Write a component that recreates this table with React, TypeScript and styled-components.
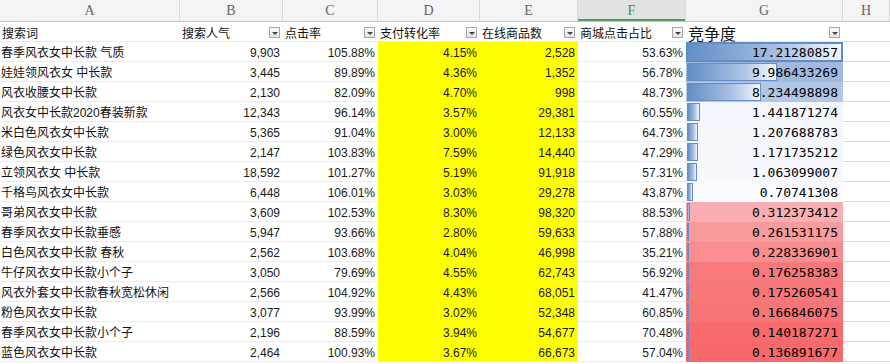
import React from "react";
import styled, { createGlobalStyle } from "styled-components";

const COLS = "180px 103px 95px 102px 98px 108px 157px 1fr";

const GlobalStyle = createGlobalStyle`
  html, body { margin: 0; padding: 0; background: #fff; }
  body { font-family: "Liberation Sans", "Noto Sans CJK SC", sans-serif; }
`;

const Sheet = styled.div`
  width: 890px;
  height: 364px;
  overflow: hidden;
  display: flex;
  flex-direction: column;
  background: #fff;
`;

const LetterRow = styled.div`
  display: grid;
  grid-template-columns: ${COLS};
  height: 22px;
  flex: none;
  box-sizing: border-box;
  background: #f4f4f4;
  border-bottom: 1px solid #c8c8c8;
`;

const ColLetter = styled.div<{ $selected?: boolean }>`
  display: flex;
  align-items: center;
  justify-content: center;
  font-family: "Liberation Serif", "DejaVu Serif", serif;
  font-size: 14px;
  color: ${(p) => (p.$selected ? "#3f8b4f" : "#666")};
  background: ${(p) => (p.$selected ? "#e2e2e2" : "transparent")};
  border-right: 1px solid #d8d8d8;
  box-shadow: ${(p) => (p.$selected ? "inset 0 -2px 0 #4f9d5f" : "none")};
`;

const Row = styled.div`
  display: grid;
  grid-template-columns: ${COLS};
  height: 20px;
  flex: none;
`;

const HeaderCell = styled.div<{ $big?: boolean }>`
  display: flex;
  align-items: center;
  justify-content: space-between;
  box-sizing: border-box;
  padding: 1px 3px 0 2px;
  font-family: "Noto Sans CJK SC", sans-serif;
  font-size: ${(p) => (p.$big ? "16px" : "12px")};
  line-height: 1;
  color: #111;
  white-space: nowrap;
  background: #fff;
  box-shadow: inset 0 -1px 0 #ebebeb;
`;

const FilterButton = styled.span`
  flex: none;
  width: 11px;
  height: 11px;
  box-sizing: border-box;
  border: 1px solid #a8a8a8;
  background: linear-gradient(#fbfbfb, #e4e4e4);
  display: flex;
  align-items: center;
  justify-content: center;
  &::after {
    content: "";
    border-left: 3px solid transparent;
    border-right: 3px solid transparent;
    border-top: 3px solid #404040;
    margin-top: 1px;
  }
`;

const KeywordCell = styled.div`
  box-sizing: border-box;
  height: 20px;
  padding: 3px 2px 0 1px;
  line-height: 17px;
  font-family: "Liberation Sans", "Noto Sans CJK SC", sans-serif;
  font-size: 12px;
  color: #111;
  white-space: nowrap;
  overflow: hidden;
  background: #fff;
  box-shadow: inset 0 -1px 0 #ececec;
`;

const NumberCell = styled.div<{ $highlight?: boolean }>`
  box-sizing: border-box;
  height: 20px;
  padding: 3px 3px 0 2px;
  line-height: 17px;
  font-family: "Liberation Sans", sans-serif;
  font-size: 12px;
  color: #1a1a1a;
  text-align: right;
  white-space: nowrap;
  overflow: hidden;
  background: ${(p) => (p.$highlight ? "#ffff00" : "#fff")};
  box-shadow: ${(p) => (p.$highlight ? "none" : "inset 0 -1px 0 #ececec")};
`;

const ScoreCell = styled.div`
  position: relative;
  box-sizing: border-box;
  height: 20px;
  padding: 2px 5px 0 2px;
  line-height: 18px;
  font-family: "DejaVu Sans Mono", "Liberation Mono", monospace;
  font-size: 13px;
  color: #000;
  text-align: right;
  white-space: nowrap;
  overflow: hidden;
`;

const DataBar = styled.span`
  position: absolute;
  left: 1px;
  top: 1px;
  bottom: 1px;
  box-sizing: border-box;
  border: 1px solid #638ec6;
  background: linear-gradient(90deg, #638ec6 0%, #a9c0e3 60%, #f4f7fc 100%);
`;

const ScoreText = styled.span`
  position: relative;
`;

const EmptyCell = styled.div`
  background: #fff;
  box-shadow: inset 0 -1px 0 #d9d9d9;
`;

type Item = [string, string, string, string, string, string, number];

const rows: Item[] = [
  ["春季风衣女中长款 气质", "9,903", "105.88%", "4.15%", "2,528", "53.63%", 17.21280857],
  ["娃娃领风衣女 中长款", "3,445", "89.89%", "4.36%", "1,352", "56.78%", 9.986433269],
  ["风衣收腰女中长款", "2,130", "82.09%", "4.70%", "998", "48.73%", 8.234498898],
  ["风衣女中长款2020春装新款", "12,343", "96.14%", "3.57%", "29,381", "60.55%", 1.441871274],
  ["米白色风衣女中长款", "5,365", "91.04%", "3.00%", "12,133", "64.73%", 1.207688783],
  ["绿色风衣女中长款", "2,147", "103.83%", "7.59%", "14,440", "47.29%", 1.171735212],
  ["立领风衣女 中长款", "18,592", "101.27%", "5.19%", "91,918", "57.31%", 1.063099007],
  ["千格鸟风衣女中长款", "6,448", "106.01%", "3.03%", "29,278", "43.87%", 0.70741308],
  ["哥弟风衣女中长款", "3,609", "102.53%", "8.30%", "98,320", "88.53%", 0.312373412],
  ["春季风衣女中长款垂感", "5,947", "93.66%", "2.80%", "59,633", "57.88%", 0.261531175],
  ["白色风衣女中长款 春秋", "2,562", "103.68%", "4.04%", "46,998", "35.21%", 0.228336901],
  ["牛仔风衣女中长款小个子", "3,050", "79.69%", "4.55%", "62,743", "56.92%", 0.176258383],
  ["风衣外套女中长款春秋宽松休闲", "2,566", "104.92%", "4.43%", "68,051", "41.47%", 0.175260541],
  ["粉色风衣女中长款", "3,077", "93.99%", "3.02%", "52,348", "60.85%", 0.166846075],
  ["春季风衣女中长款小个子", "2,196", "88.59%", "3.94%", "54,677", "70.48%", 0.140187271],
  ["蓝色风衣女中长款", "2,464", "100.93%", "3.67%", "66,673", "57.04%", 0.136891677],
];

const scores = rows.map((r) => r[6]);
const sorted = [...scores].sort((a, b) => a - b);
const maxScore = sorted[sorted.length - 1];
const minScore = sorted[0];
const midScore = (sorted[7] + sorted[8]) / 2;

const WHITE = [252, 252, 255];
const BLUE = [90, 138, 198];
const RED = [248, 105, 107];

const mix = (a: number[], b: number[], t: number) =>
  `rgb(${a.map((v, i) => Math.round(v + (b[i] - v) * t)).join(",")})`;

const scaleColor = (v: number) =>
  v >= midScore
    ? mix(WHITE, BLUE, (v - midScore) / (maxScore - midScore))
    : mix(WHITE, RED, (midScore - v) / (midScore - minScore));

const BAR_MAX = 155;
const barWidth = (v: number) => Math.max(2, Math.round((v / maxScore) * BAR_MAX));

const letters = ["A", "B", "C", "D", "E", "F", "G", "H"];
const headers = ["搜索词", "搜索人气", "点击率", "支付转化率", "在线商品数", "商城点击占比"];

export default function App() {
  return (
    <>
      <GlobalStyle />
      <Sheet>
        <LetterRow>
          {letters.map((l) => (
            <ColLetter key={l} $selected={l === "F"}>
              {l}
            </ColLetter>
          ))}
        </LetterRow>
        <Row>
          {headers.map((h, i) => (
            <HeaderCell key={h}>
              <span>{h}</span>
              {i > 0 && <FilterButton />}
            </HeaderCell>
          ))}
          <HeaderCell $big>
            <span>竞争度</span>
            <FilterButton />
          </HeaderCell>
          <EmptyCell />
        </Row>
        {rows.map((r) => (
          <Row key={r[0]}>
            <KeywordCell>{r[0]}</KeywordCell>
            <NumberCell>{r[1]}</NumberCell>
            <NumberCell>{r[2]}</NumberCell>
            <NumberCell $highlight>{r[3]}</NumberCell>
            <NumberCell $highlight>{r[4]}</NumberCell>
            <NumberCell>{r[5]}</NumberCell>
            <ScoreCell style={{ background: scaleColor(r[6]) }}>
              <DataBar style={{ width: barWidth(r[6]) }} />
              <ScoreText>{r[6]}</ScoreText>
            </ScoreCell>
            <EmptyCell />
          </Row>
        ))}
      </Sheet>
    </>
  );
}
